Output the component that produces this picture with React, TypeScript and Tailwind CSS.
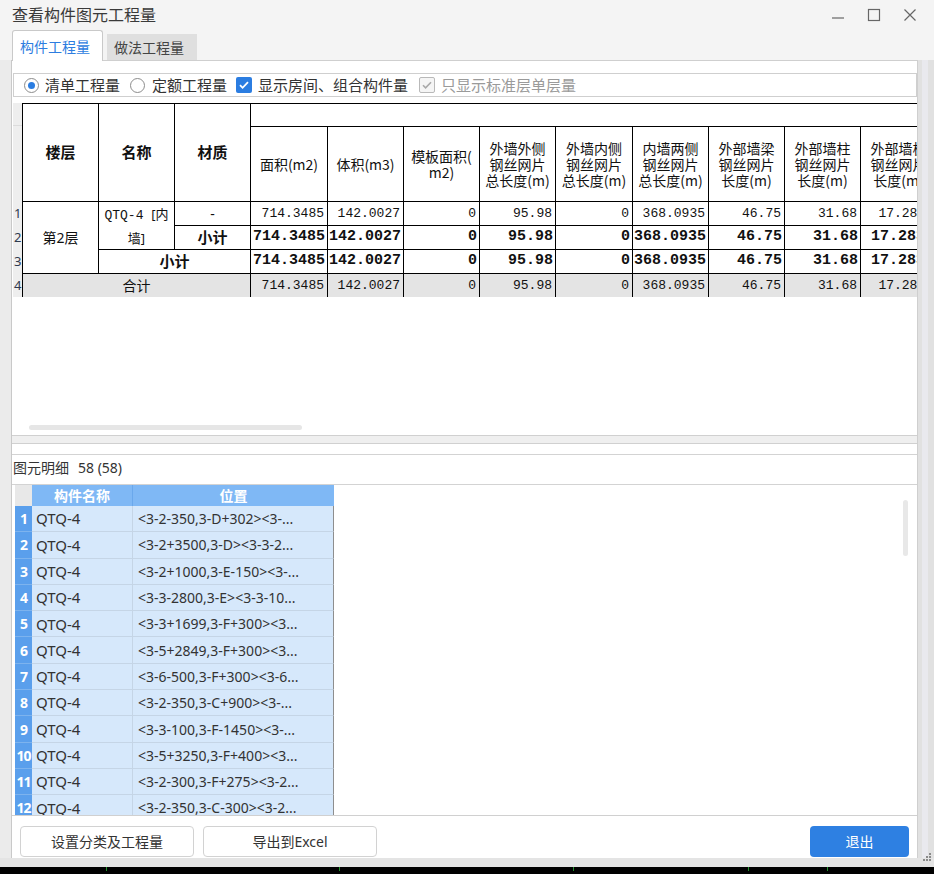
import React from "react";

const colWidths = [76, 76, 76, 77, 76, 76, 76, 77, 76, 76, 76, 76];

const qtyHeads: string[][] = [
    ["面积(m2)"],
    ["体积(m3)"],
    ["模板面积(", "m2)"],
    ["外墙外侧", "钢丝网片", "总长度(m)"],
    ["外墙内侧", "钢丝网片", "总长度(m)"],
    ["内墙两侧", "钢丝网片", "总长度(m)"],
    ["外部墙梁", "钢丝网片", "长度(m)"],
    ["外部墙柱", "钢丝网片", "长度(m)"],
    ["外部墙板", "钢丝网片", "长度(m)"],
];

const values = ["714.3485", "142.0027", "0", "95.98", "0", "368.0935", "46.75", "31.68", "17.2835"];

const positions = [
    "<3-2-350,3-D+302><3-...",
    "<3-2+3500,3-D><3-3-2...",
    "<3-2+1000,3-E-150><3-...",
    "<3-3-2800,3-E><3-3-10...",
    "<3-3+1699,3-F+300><3...",
    "<3-5+2849,3-F+300><3...",
    "<3-6-500,3-F+300><3-6...",
    "<3-2-350,3-C+900><3-...",
    "<3-3-100,3-F-1450><3-...",
    "<3-5+3250,3-F+400><3...",
    "<3-2-300,3-F+275><3-2...",
    "<3-2-350,3-C-300><3-2...",
];

const cell = "border border-black p-0";
const numNormal = "text-right pr-[3px] font-['Liberation_Mono',monospace] text-[13px]";
const numBold = "text-right pr-[2px] font-['Liberation_Mono',monospace] text-[15px] font-bold";

function Radio({ checked }: { checked?: boolean }) {
    return (
        <span className="w-[15px] h-[15px] rounded-full border border-[#8c8c8c] bg-white flex items-center justify-center">
            {checked ? <span className="w-[7px] h-[7px] rounded-full bg-[#2b7de1]" /> : null}
        </span>
    );
}

function Check({ disabled }: { disabled?: boolean }) {
    return disabled ? (
        <span className="w-[16px] h-[16px] rounded-[2px] border border-[#b9b9b9] bg-[#f5f5f5] flex items-center justify-center">
            <svg width="12" height="12" viewBox="0 0 12 12" fill="none" stroke="#a9a9a9" strokeWidth="1.6">
                <path d="M2 6.2l2.6 2.6L10 3.2" />
            </svg>
        </span>
    ) : (
        <span className="w-[16px] h-[16px] rounded-[2px] bg-[#2b7de1] flex items-center justify-center">
            <svg width="12" height="12" viewBox="0 0 12 12" fill="none" stroke="#fff" strokeWidth="1.8">
                <path d="M2 6.2l2.6 2.6L10 3.2" />
            </svg>
        </span>
    );
}

function QtyTable() {
    return (
        <table className="border-collapse table-fixed w-[914px] text-[#111]">
            <colgroup>
                {colWidths.map((w, i) => (
                    <col key={i} style={{ width: w }} />
                ))}
            </colgroup>
            <thead>
                <tr className="h-[23px]">
                    {["楼层", "名称", "材质"].map((h) => (
                        <th key={h} rowSpan={2} className={`${cell} text-[15px] font-bold`}>
                            {h}
                        </th>
                    ))}
                    <th colSpan={9} className={cell} />
                </tr>
                <tr className="h-[75px]">
                    {qtyHeads.map((lines, i) => (
                        <th
                            key={i}
                            className={`${cell} font-normal text-[14px] leading-[16px] text-center font-['Noto_Sans_CJK_SC',sans-serif]`}
                        >
                            {lines.map((l, j) => (
                                <div key={j} className="whitespace-nowrap">
                                    {l}
                                </div>
                            ))}
                        </th>
                    ))}
                </tr>
            </thead>
            <tbody>
                <tr className="h-[24px]">
                    <td rowSpan={3} className={`${cell} text-center text-[14px]`}>
                        第2层
                    </td>
                    <td rowSpan={2} className={`${cell} text-center text-[13px] leading-[22px]`}>
                        <span className="font-['Liberation_Mono',monospace]">QTQ-4 </span>[内
                        <br />
                        墙]
                    </td>
                    <td className={`${cell} text-center text-[14px]`}>-</td>
                    {values.map((v, i) => (
                        <td key={i} className={`${cell} ${numNormal}`}>
                            {v}
                        </td>
                    ))}
                </tr>
                <tr className="h-[24px]">
                    <td className={`${cell} text-center text-[15px] font-bold`}>小计</td>
                    {values.map((v, i) => (
                        <td key={i} className={`${cell} ${numBold}`}>
                            {v}
                        </td>
                    ))}
                </tr>
                <tr className="h-[24px]">
                    <td colSpan={2} className={`${cell} text-center text-[15px] font-bold`}>
                        小计
                    </td>
                    {values.map((v, i) => (
                        <td key={i} className={`${cell} ${numBold}`}>
                            {v}
                        </td>
                    ))}
                </tr>
                <tr className="h-[24px] bg-[#e4e4e4]">
                    <td colSpan={3} className={`${cell} text-center text-[14px]`}>
                        合计
                    </td>
                    {values.map((v, i) => (
                        <td key={i} className={`${cell} ${numNormal}`}>
                            {v}
                        </td>
                    ))}
                </tr>
            </tbody>
        </table>
    );
}

function DetailGrid() {
    return (
        <div className="ml-[3px] w-[319px] flex flex-col">
            <div className="flex h-[26px] text-white font-bold text-[14px]">
                <div className="w-[17px] bg-[#e8e8e8]" />
                <div className="w-[101px] bg-[#7fb8f5] border-r border-[#6aa8ec] flex items-center justify-center">
                    构件名称
                </div>
                <div className="w-[201px] bg-[#7fb8f5] flex items-center justify-center">位置</div>
            </div>
            {positions.map((p, i) => (
                <div key={i} className="flex h-[26.3px] shrink-0">
                    <div className="w-[17px] bg-[#5a9fec] border-b border-[#7db3ee] text-white font-bold text-[14px] flex items-center justify-center tracking-[-1px]">
                        {i + 1}
                    </div>
                    <div className="w-[101px] bg-[#d6e8fb] border-b border-r border-[#c5d5e6] text-[15px] pl-[4px] flex items-center">
                        QTQ-4
                    </div>
                    <div className="w-[201px] bg-[#d6e8fb] border-b border-r border-b-[#c5d5e6] border-r-[#8e8e8e] text-[14px] pl-[5px] flex items-center whitespace-nowrap overflow-hidden">
                        {p}
                    </div>
                </div>
            ))}
        </div>
    );
}

export default function App() {
    return (
        <div className="relative w-[934px] h-[874px] overflow-hidden bg-[#f4f4f4] font-['Noto_Sans','Noto_Sans_CJK_SC',sans-serif] text-[#333]">
            {/* title bar */}
            <div className="h-[30px] flex items-center pl-[12px] pr-[17px]">
                <span className="text-[16px] text-[#3a3a3a]">查看构件图元工程量</span>
                <div className="ml-auto flex items-center gap-[22px] text-[#666]">
                    <svg width="14" height="14" viewBox="0 0 14 14" stroke="currentColor" strokeWidth="1.2">
                        <path d="M1 10h12" />
                    </svg>
                    <svg width="14" height="14" viewBox="0 0 14 14" fill="none" stroke="currentColor" strokeWidth="1.2">
                        <rect x="1.5" y="1.5" width="11" height="11" />
                    </svg>
                    <svg width="14" height="14" viewBox="0 0 14 14" stroke="currentColor" strokeWidth="1.2">
                        <path d="M1.5 1.5l11 11M12.5 1.5l-11 11" />
                    </svg>
                </div>
            </div>

            {/* tabs */}
            <div className="h-[30px] flex items-end pl-[12px] gap-[4px]">
                <div className="relative z-10 -mb-[1px] w-[91px] h-[31px] bg-white border border-b-0 border-[#c9c9c9] rounded-t-[3px] pl-[7px] flex items-center text-[14px] text-[#2d7de0]">
                    构件工程量
                </div>
                <div className="w-[90px] h-[26px] bg-[#dfdfdf] pl-[7px] flex items-center text-[14px] text-[#444]">
                    做法工程量
                </div>
            </div>

            {/* body */}
            <div className="flex h-[798px]">
                <div className="w-[12px] bg-[#ebebeb] border-r border-[#c9c9c9]" />
                <div className="w-[906px] flex flex-col bg-white border-t border-r border-[#cfcfcf]">
                    <div className="h-[12px]" />
                    <div className="ml-[1px] h-[24px] border border-[#cfcfcf] flex items-center pl-[10px] text-[15px]">
                        <Radio checked />
                        <span className="ml-[6px]">清单工程量</span>
                        <span className="ml-[10px]">
                            <Radio />
                        </span>
                        <span className="ml-[7px]">定额工程量</span>
                        <span className="ml-[9px]">
                            <Check />
                        </span>
                        <span className="ml-[6px]">显示房间、组合构件量</span>
                        <span className="ml-[11px]">
                            <Check disabled />
                        </span>
                        <span className="ml-[6px] text-[#9a9a9a]">只显示标准层单层量</span>
                    </div>

                    {/* quantity table */}
                    <div className="h-[338px] pt-[6px] flex flex-col">
                        <div className="flex h-[194px]">
                            <div className="ml-[1px] w-[9px] bg-[#eeeeee] flex flex-col text-[13px] text-[#2f3a4f] leading-[24px]">
                                <div className="h-[23px] border-b border-[#dcdcdc]" />
                                <div className="h-[75px]" />
                                {[1, 2, 3, 4].map((n) => (
                                    <div key={n} className="h-[24px] pl-[1px] overflow-hidden">
                                        {n}
                                    </div>
                                ))}
                            </div>
                            <div className="w-[895px] overflow-hidden">
                                <QtyTable />
                            </div>
                        </div>
                        <div className="h-[128px]" />
                        <div className="ml-[17px] w-[273px] h-[5px] rounded-full bg-[#e6e6e6]" />
                    </div>

                    <div className="h-[9px] border-t border-b border-[#d0d0d0] bg-[#efefef]" />
                    <div className="h-[10px]" />
                    <div className="h-[31px] border-t border-b border-[#d3d3d3] flex items-center pl-[1px] pb-[5px] text-[14px]">
                        图元明细<span className="ml-[9px]">58 (58)</span>
                    </div>

                    {/* detail */}
                    <div className="h-[330px] overflow-hidden flex">
                        <DetailGrid />
                        <div className="flex-1" />
                        <div className="mt-[15px] mr-[9px] w-[5px] h-[56px] rounded-full bg-[#e8e8e8]" />
                    </div>

                    {/* buttons */}
                    <div className="h-[43px] border-t border-[#d0d0d0] flex items-start pt-[10px] pl-[8px] pr-[8px] text-[14px]">
                        <button className="w-[174px] h-[31px] rounded-[4px] border border-[#d2d2d2] bg-white text-[#333]">
                            设置分类及工程量
                        </button>
                        <button className="ml-[9px] w-[174px] h-[31px] rounded-[4px] border border-[#d2d2d2] bg-white text-[#333]">
                            导出到Excel
                        </button>
                        <button className="ml-auto w-[99px] h-[31px] rounded-[4px] bg-[#2e80e2] text-white">退出</button>
                    </div>
                </div>
                <div className="w-[16px] bg-[#e1e1e1] flex">
                    <div className="w-[4px]" />
                    <div className="w-[6px] bg-[#e9e9ee]" />
                </div>
            </div>

            <div className="h-[9px] bg-[#e4e4e4]" />
            <div className="relative h-[7px] bg-black">
                {[106, 339, 573, 748, 827].map((x) => (
                    <span key={x} className="absolute top-0 w-[1px] h-[4px] bg-[#1f8f2a]" style={{ left: x }} />
                ))}
            </div>

            {/* resize grip */}
            <svg className="absolute right-[2px] bottom-[12px]" width="10" height="10" viewBox="0 0 10 10" fill="#8a8a8a">
                <rect x="7" y="1" width="2" height="2" />
                <rect x="4" y="4" width="2" height="2" />
                <rect x="7" y="4" width="2" height="2" />
                <rect x="1" y="7" width="2" height="2" />
                <rect x="4" y="7" width="2" height="2" />
                <rect x="7" y="7" width="2" height="2" />
            </svg>
        </div>
    );
}
